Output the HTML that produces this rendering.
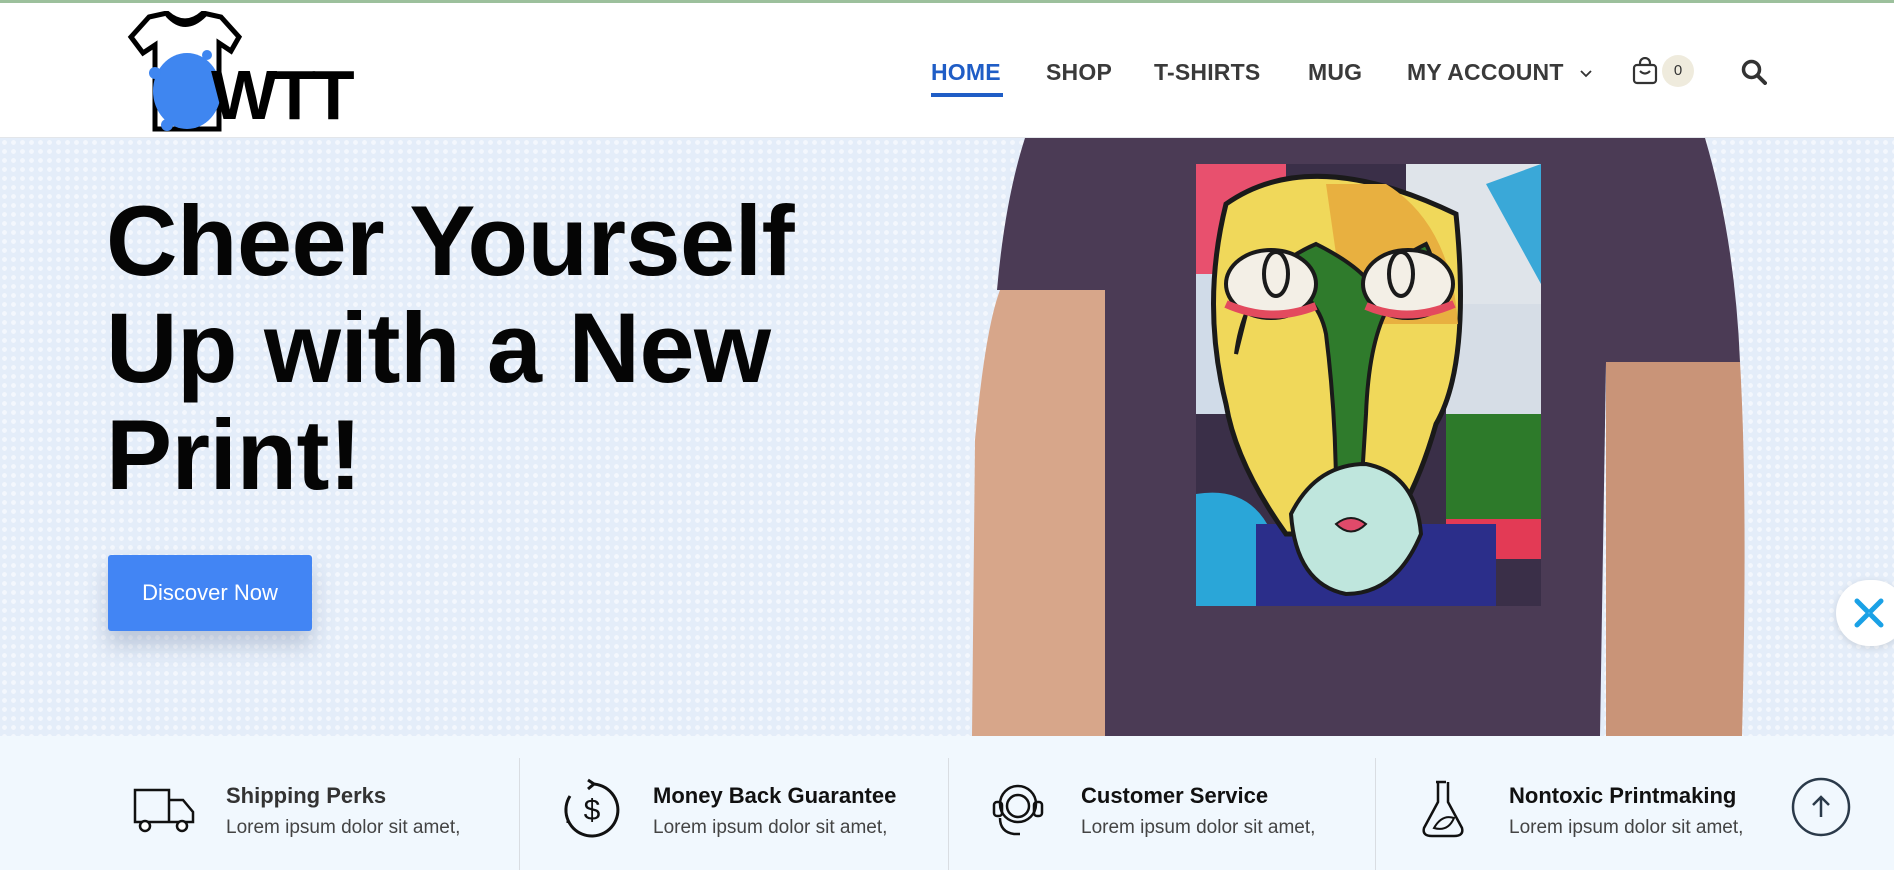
<!DOCTYPE html>
<html><head><meta charset="utf-8"><style>
*{margin:0;padding:0;box-sizing:border-box}
body{width:1894px;height:870px;overflow:hidden;background:#fff;font-family:"Liberation Sans",sans-serif;position:relative}
.topline{position:absolute;left:0;top:0;width:1894px;height:3px;background:#9cc09c}
header{position:absolute;left:0;top:3px;width:1894px;height:135px;background:#fff;border-bottom:1px solid #e3e6ea}
.nav a{position:absolute;top:56px;font-size:23px;font-weight:bold;color:#3a3a3a;text-decoration:none;letter-spacing:0.2px}
.hero{position:absolute;left:0;top:138px;width:1894px;height:598px;background-color:#e4edf9;
background-image:radial-gradient(circle,#f3f7fd 2.2px,transparent 2.6px);background-size:9px 9px}
h1{position:absolute;left:106px;top:49px;font-size:99px;line-height:107px;font-weight:900;color:#050505;letter-spacing:-0.5px;white-space:nowrap}
.btn{position:absolute;left:108px;top:555px;width:204px;height:76px;background:#4285f4;border-radius:3px;color:#fff;font-size:22px;line-height:76px;text-align:center;box-shadow:0 14px 22px rgba(60,80,120,.25)}
.feat{position:absolute;left:0;top:736px;width:1894px;height:134px;background:#f1f8fe}
.div{position:absolute;top:22px;width:1px;height:112px;background:#d9dde2}
.t{position:absolute;top:47px;font-size:22px;font-weight:bold;color:#111}
.s{position:absolute;top:81px;font-size:19px;color:#444}
.ic{position:absolute;top:42px}
</style></head><body>
<div class="topline"></div>
<header>
<svg style="position:absolute;left:127px;top:8px" width="232" height="124" viewBox="0 0 232 124">
<path d="M22 6 L40 2 Q58 18 76 2 L94 6 L112 26 L104 40 L92 32 L92 118 L28 118 L28 34 L16 42 L4 26 Z" fill="#fff" stroke="#000" stroke-width="5"/>
<path d="M40 4 Q58 24 78 4" fill="none" stroke="#000" stroke-width="4"/>
<ellipse cx="60" cy="80" rx="34" ry="38" fill="#3f86f0"/>
<circle cx="28" cy="62" r="6" fill="#3f86f0"/><circle cx="80" cy="44" r="5" fill="#3f86f0"/><circle cx="40" cy="114" r="6" fill="#3f86f0"/>
<text x="84" y="108" font-family="Liberation Sans" font-weight="900" font-size="70" fill="#000" letter-spacing="-4">WTT</text>
</svg>
<div class="nav">
<a style="left:931px;color:#1f5dc6">HOME</a>
<div style="position:absolute;left:931px;top:90px;width:72px;height:4px;background:#1f5dc6"></div>
<a style="left:1046px">SHOP</a>
<a style="left:1154px">T-SHIRTS</a>
<a style="left:1308px">MUG</a>
<a style="left:1407px">MY ACCOUNT</a>
<svg style="position:absolute;left:1580px;top:67px" width="12" height="8" viewBox="0 0 12 8"><path d="M1 1l5 5 5-5" fill="none" stroke="#333" stroke-width="1.8"/></svg>
<svg style="position:absolute;left:1632px;top:54px" width="26" height="28" viewBox="0 0 26 28"><rect x="2" y="8" width="22" height="18" rx="3" fill="none" stroke="#333" stroke-width="2.2"/><path d="M8 8V6a5 5 0 0110 0v2M8 14q5 5 10 0" fill="none" stroke="#333" stroke-width="2.2"/></svg>
<div style="position:absolute;left:1662px;top:52px;width:32px;height:32px;border-radius:50%;background:#efebdd;font-size:15px;color:#333;text-align:center;line-height:32px">0</div>
<svg style="position:absolute;left:1741px;top:56px" width="26" height="26" viewBox="0 0 26 26"><circle cx="10.5" cy="10.5" r="8" fill="none" stroke="#333" stroke-width="3.5"/><path d="M16.5 16.5L24 24" stroke="#333" stroke-width="4" stroke-linecap="round"/></svg>
</div>
</header>
<div class="hero">
<svg style="position:absolute;left:0;top:0" width="1894" height="598" viewBox="0 138 1894 598">
<path d="M972 736 L975 440 Q985 330 1000 290 L1105 290 L1105 736 Z" fill="#d7a68a"/>
<path d="M1606 362 L1740 362 Q1748 500 1742 736 L1606 736 Z" fill="#c99478"/>
<path d="M1025 138 L1705 138 Q1735 240 1740 362 L1606 362 L1600 736 L1105 736 L1105 290 L997 290 Q1005 200 1025 138 Z" fill="#4b3b55"/>
<g transform="translate(1196,164)">
<rect width="345" height="442" fill="#3a2f48"/>
<rect x="0" y="0" width="90" height="110" fill="#e8506e"/>
<rect x="210" y="0" width="135" height="150" fill="#dfe4ea"/>
<path d="M290 20 L345 0 L345 120 Z" fill="#3aa8d8"/>
<rect x="0" y="110" width="40" height="140" fill="#d0dbe8"/>
<rect x="250" y="140" width="95" height="160" fill="#d6dde6"/>
<rect x="250" y="250" width="95" height="110" fill="#2d7a2a"/>
<rect x="250" y="355" width="95" height="40" fill="#e33a55"/>
<path d="M0 330 Q60 320 80 380 L80 442 L0 442 Z" fill="#2aa6d8"/>
<path d="M60 360 L300 360 L300 442 L60 442 Z" fill="#2b2e8a"/>
<path d="M30 40 Q115 -20 260 50 Q275 200 240 260 Q220 330 190 370 L90 370 Q40 300 30 240 Q5 140 30 40 Z" fill="#f0d85a" stroke="#1a1a1a" stroke-width="5"/>
<path d="M130 20 L190 20 Q255 60 262 160 L150 160 Z" fill="#e8b040"/>
<path d="M40 190 Q50 110 120 80 Q160 100 175 120 Q190 100 230 80 Q240 100 235 110 Q175 120 170 250 L165 330 L140 330 Q140 250 130 170 Q120 120 60 110 Z" fill="#2f7b2c" stroke="#1a1a1a" stroke-width="4"/>
<ellipse cx="75" cy="120" rx="45" ry="34" fill="#f3efe6" stroke="#1a1a1a" stroke-width="4"/>
<ellipse cx="212" cy="120" rx="45" ry="34" fill="#f3efe6" stroke="#1a1a1a" stroke-width="4"/>
<ellipse cx="80" cy="110" rx="12" ry="22" fill="none" stroke="#1a1a1a" stroke-width="4"/>
<ellipse cx="205" cy="110" rx="12" ry="22" fill="none" stroke="#1a1a1a" stroke-width="4"/>
<path d="M30 140 Q75 160 120 142" fill="none" stroke="#e34a5e" stroke-width="8"/>
<path d="M170 142 Q212 160 258 140" fill="none" stroke="#e34a5e" stroke-width="8"/>
<path d="M95 350 Q120 300 170 300 Q220 310 225 370 Q200 430 150 430 Q100 420 95 350 Z" fill="#bfe6dd" stroke="#1a1a1a" stroke-width="4"/>
<path d="M140 360 Q155 348 170 360 Q155 375 140 360 Z" fill="#e04a6a" stroke="#1a1a1a" stroke-width="2"/>
</g>
</svg>
<h1>Cheer Yourself<br>Up with a New<br>Print!</h1>
</div>
<div class="btn">Discover Now</div>
<div style="position:absolute;left:1836px;top:580px;width:70px;height:66px;background:#fff;border-radius:33px;box-shadow:0 2px 8px rgba(0,0,0,.12)">
<svg style="position:absolute;left:17px;top:17px" width="32" height="32" viewBox="0 0 32 32"><path d="M4 4 L14 14 M28 4 L18 14 M4 28 L14 18 M28 28 L18 18" stroke="#1aa1e6" stroke-width="5" stroke-linecap="round"/></svg></div>
<div class="feat">
<div class="div" style="left:519px"></div><div class="div" style="left:948px"></div><div class="div" style="left:1375px"></div>
<svg class="ic" style="left:132px;top:50px" width="64" height="48" viewBox="0 0 64 48"><path d="M3 4h34v32H3zM37 14h14l10 12v10H37" fill="none" stroke="#111" stroke-width="2.5"/><circle cx="13" cy="40" r="5" fill="#fff" stroke="#111" stroke-width="2.5"/><circle cx="50" cy="40" r="5" fill="#fff" stroke="#111" stroke-width="2.5"/></svg>
<div class="t" style="left:226px;color:#333">Shipping Perks</div><div class="s" style="left:226px">Lorem ipsum dolor sit amet,</div>
<svg class="ic" style="left:560px;top:42px" width="64" height="64" viewBox="0 0 64 64"><path d="M32 6 A26 26 0 1 1 10 18" fill="none" stroke="#111" stroke-width="3"/><path d="M28 2l6 4-6 5" fill="none" stroke="#111" stroke-width="3"/><path d="M6 30v4M8 42v3" stroke="#111" stroke-width="3"/><text x="32" y="42" font-size="30" text-anchor="middle" font-family="Liberation Sans" fill="#111">$</text></svg>
<div class="t" style="left:653px">Money Back Guarantee</div><div class="s" style="left:653px">Lorem ipsum dolor sit amet,</div>
<svg class="ic" style="left:988px;top:42px" width="60" height="64" viewBox="0 0 60 64"><circle cx="30" cy="26" r="18" fill="none" stroke="#111" stroke-width="2.5"/><circle cx="30" cy="28" r="11" fill="none" stroke="#111" stroke-width="2.5"/><rect x="6" y="24" width="8" height="14" rx="3" fill="none" stroke="#111" stroke-width="2.5"/><rect x="46" y="24" width="8" height="14" rx="3" fill="none" stroke="#111" stroke-width="2.5"/><path d="M12 40q0 14 14 16h6" fill="none" stroke="#111" stroke-width="2.5"/></svg>
<div class="t" style="left:1081px">Customer Service</div><div class="s" style="left:1081px">Lorem ipsum dolor sit amet,</div>
<svg class="ic" style="left:1418px;top:42px" width="50" height="64" viewBox="0 0 50 64"><path d="M18 4h10M20 4v20L6 50q-2 8 8 8h22q10 0 8-8L30 24V4" fill="none" stroke="#111" stroke-width="2.5"/><path d="M16 50q8-14 20-10q-6 14-20 10z" fill="none" stroke="#111" stroke-width="2"/></svg>
<div class="t" style="left:1509px">Nontoxic Printmaking</div><div class="s" style="left:1509px">Lorem ipsum dolor sit amet,</div>
<svg style="position:absolute;left:1791px;top:41px" width="60" height="60" viewBox="0 0 60 60"><circle cx="30" cy="30" r="28" fill="none" stroke="#2b3a4a" stroke-width="2.5"/><path d="M30 40V20M22 28l8-8 8 8" fill="none" stroke="#2b3a4a" stroke-width="2.5"/></svg>
</div>
</body></html>
